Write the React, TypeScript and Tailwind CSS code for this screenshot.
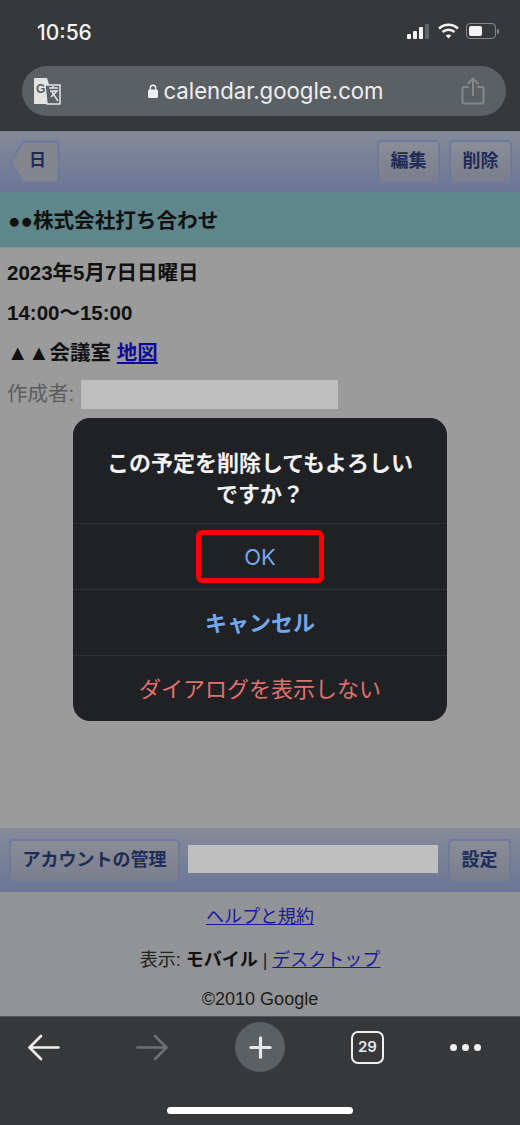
import React from 'react';
import { Plus } from 'lucide-react';

const jp = "font-['Liberation_Sans','Noto_Sans_CJK_JP',sans-serif]";

function BarButton({ label, className = '' }: { label: string; className?: string }) {
  return (
    <div
      className={`h-[44px] pb-[2px] flex items-center justify-center rounded-[5px] border-2 border-[#6d7a9e] bg-gradient-to-b from-[#8b8d97] to-[#7a7d8c] text-[18px] font-bold text-[#1f2c57] ${className}`}
    >
      {label}
    </div>
  );
}

function DialogRow({ label, className }: { label: string; className: string }) {
  return (
    <div className={`h-[66px] pt-[1px] flex items-center justify-center border-t border-[#2e3036] ${className}`}>
      {label}
    </div>
  );
}

function NavArrow({ color, flip = false }: { color: string; flip?: boolean }) {
  return (
    <svg width="32" height="27" viewBox="0 0 32 27" fill="none" stroke={color} strokeWidth="2.6" strokeLinecap="round" strokeLinejoin="round" className={flip ? 'rotate-180' : ''}>
      <path d="M30.5 13.5 H2 M13 2 L1.5 13.5 L13 25" />
    </svg>
  );
}

export default function App() {
  return (
    <div className={`relative w-[520px] h-[1125px] overflow-hidden flex flex-col bg-[#9b9b9b] ${jp}`}>
      {/* status bar + url bar */}
      <div className="h-[131px] shrink-0 bg-[#37383a] flex flex-col">
        <div className="h-[66px] flex items-start justify-between pl-[37px] pr-[21px] pt-[19px]">
          <span className="text-[21px] leading-[28px] font-['Inter',sans-serif] font-medium text-[#f4f4f4]">10:56</span>
          <div className="flex items-center gap-[7px] pt-[4px]">
            <svg width="24" height="15" viewBox="0 0 24 15">
              <rect x="0" y="10" width="4" height="5" rx="1" fill="#f4f4f4" />
              <rect x="6" y="7" width="4" height="8" rx="1" fill="#f4f4f4" />
              <rect x="12" y="3" width="4" height="12" rx="1" fill="#f4f4f4" />
              <rect x="18" y="0" width="4" height="15" rx="1" fill="#636466" />
            </svg>
            <svg width="21" height="16" viewBox="0 0 21 16" fill="none" stroke="#f4f4f4" strokeWidth="2.4">
              <path d="M1 5.5 C6.5 .5 14.5 .5 20 5.5" />
              <path d="M4.5 9 C8 6 13 6 16.5 9" />
              <path d="M10.5 15.5 L7.7 12.4 C9.3 11.2 11.7 11.2 13.3 12.4 Z" fill="#f4f4f4" stroke="none" />
            </svg>
            <div className="flex items-center gap-[1px]">
              <div className="w-[30px] h-[16px] rounded-[4px] border border-[#85878a] p-[2px]">
                <div className="w-[13px] h-full rounded-[2px] bg-[#f4f4f4]" />
              </div>
              <div className="w-[2px] h-[5px] rounded-r-sm bg-[#85878a]" />
            </div>
          </div>
        </div>
        <div className="ml-[22px] mr-[14px] h-[50px] rounded-[25px] bg-[#5b6064] flex items-center pl-[11px] pr-[21px]">
          <svg width="28" height="28" viewBox="0 0 28 28">
            <path d="M1 2 Q1 1 2 1 H14 L22 27 H2 Q1 27 1 26 Z" fill="#e4e4e4" />
            <path d="M12 8 H27 V27 H14 Z" fill="#5b6064" stroke="#e4e4e4" strokeWidth="1.5" />
            <text x="3" y="16" fontSize="12" fontWeight="700" fill="#5b6064" fontFamily="Liberation Sans">G</text>
            <path d="M16 11 H25 M20 9 V11 M17 14 H24 L18 20 M19 15 L25 24" fill="none" stroke="#e4e4e4" strokeWidth="1.5" />
          </svg>
          <div className="flex-1 flex items-center justify-center gap-[5px] pl-[10px]">
            <svg width="10" height="14" viewBox="0 0 10 14">
              <path d="M2.3 6 V4 a2.7 2.7 0 0 1 5.4 0 V6" fill="none" stroke="#efefef" strokeWidth="1.4" />
              <rect x="0" y="5.5" width="10" height="8.5" rx="1.5" fill="#efefef" />
            </svg>
            <span className="text-[22.2px] leading-[30px] font-['Inter',sans-serif] text-[#efefef]">calendar.google.com</span>
          </div>
          <svg width="24" height="28" viewBox="0 0 24 28" fill="none" stroke="#84888b" strokeWidth="2" strokeLinecap="round" strokeLinejoin="round">
            <path d="M7 10 H3 Q1.5 10 1.5 11.5 V25 Q1.5 26.5 3 26.5 H21 Q22.5 26.5 22.5 25 V11.5 Q22.5 10 21 10 H17" />
            <path d="M12 18 V2 M7 6.5 L12 1.5 L17 6.5" />
          </svg>
        </div>
      </div>

      {/* top toolbar */}
      <div className="h-[61px] shrink-0 border-t border-[#7d8290] bg-gradient-to-b from-[#858a99] to-[#6b7696] flex items-center justify-between pl-[9px] pr-[8px]">
        <div className="relative w-[51px] h-[44px]">
          <svg className="absolute inset-0" width="51" height="44" viewBox="0 0 51 44">
            <path d="M1.5 22 L14 1.5 H46 Q49.5 1.5 49.5 5 V39 Q49.5 42.5 46 42.5 H14 Z" fill="#84868f" stroke="#6d7a9e" strokeWidth="2" strokeLinejoin="round" />
          </svg>
          <span className="absolute left-[20px] top-[8px] text-[17px] leading-[26px] font-bold text-[#1f2c57]">日</span>
        </div>
        <div className="flex gap-[9px]">
          <BarButton label="編集" className="w-[63px]" />
          <BarButton label="削除" className="w-[63px]" />
        </div>
      </div>

      {/* title */}
      <div className="h-[56px] shrink-0 bg-[#5f878b] border-b border-[#7c9a9d] flex items-center pl-[8px] pt-[3px] text-[20.6px] font-bold text-[#111]">
        ●●株式会社打ち合わせ
      </div>

      {/* details */}
      <div className="flex-1 min-h-0 px-[7px] pt-[11px] text-[#111]">
        <div className="h-[40px] text-[20.5px] leading-[27px] font-bold">2023年5月7日日曜日</div>
        <div className="h-[40px] text-[20.5px] leading-[27px] font-bold">14:00〜15:00</div>
        <div className="h-[40px] text-[20.5px] leading-[27px] font-bold">
          <span className="text-[21.5px]">▲▲</span>会議室 <span className="text-[#0b0b96] underline">地図</span>
        </div>
        <div className="flex items-center h-[30px] text-[20.5px] text-[#5c5c5c]">
          <span>作成者:</span>
          <div className="ml-[7px] w-[257px] h-[29px] bg-[#bfbfbf]" />
        </div>
      </div>

      {/* account bar */}
      <div className="h-[64px] shrink-0 border-t-2 border-[#858a98] bg-gradient-to-b from-[#858a99] to-[#6b7696] flex items-center pl-[9px] pr-[8px]">
        <BarButton label="アカウントの管理" className="w-[171px]" />
        <div className="ml-[8px] mb-[4px] w-[250px] h-[28px] bg-[#bfbfbf]" />
        <BarButton label="設定" className="w-[63px] ml-[10px]" />
      </div>

      {/* footer */}
      <div className="h-[124px] shrink-0 bg-[#929397] flex flex-col items-center pt-[12px] text-[18px] text-[#222]">
        <div className="h-[42px] leading-[26px] text-[#1a1a9c] underline">ヘルプと規約</div>
        <div className="h-[41px] leading-[28px]">
          表示: <span className="font-bold text-[#111]">モバイル</span> | <span className="text-[#1a1a9c] underline">デスクトップ</span>
        </div>
        <div className="leading-[24px] text-[#1c1c1c]">©2010 Google</div>
      </div>

      {/* browser bottom bar */}
      <div className="h-[109px] shrink-0 bg-[#37383a] border-t border-[#55565a] flex flex-col">
        <div className="h-[60px] flex items-center">
          <div className="w-[88px] flex justify-center">
            <NavArrow color="#f0f0f0" />
          </div>
          <div className="w-[128px] flex justify-center">
            <NavArrow color="#6e6f71" flip />
          </div>
          <div className="ml-[19px] w-[50px] h-[50px] rounded-full bg-[#5b6064] flex items-center justify-center">
            <Plus className="w-[33px] h-[33px] text-[#e8e8e8]" strokeWidth={2.3} />
          </div>
          <div className="ml-[66px] w-[33px] h-[33px] rounded-[7px] border-[2.5px] border-[#f0f0f0] flex items-center justify-center text-[15px] font-['Inter',sans-serif] font-semibold text-[#e8e8e8]">
            29
          </div>
          <div className="ml-[66px] flex gap-[5px]">
            <div className="w-[7px] h-[7px] rounded-full bg-[#f0f0f0]" />
            <div className="w-[7px] h-[7px] rounded-full bg-[#f0f0f0]" />
            <div className="w-[7px] h-[7px] rounded-full bg-[#f0f0f0]" />
          </div>
        </div>
        <div className="flex justify-center pt-[30px]">
          <div className="w-[186px] h-[7px] rounded-full bg-white" />
        </div>
      </div>

      {/* confirm dialog */}
      <div className="absolute left-[73px] top-[418px] w-[374px] h-[303px] rounded-[17px] bg-[#202125] overflow-hidden flex flex-col">
        <div className="h-[105px] shrink-0 pt-[30px] text-center text-[22px] leading-[31px] font-bold text-[#f2f2f2]">
          <div>この予定を削除してもよろしい</div>
          <div>ですか{'\uFF1F'}</div>
        </div>
        <DialogRow label="OK" className="text-[22px] text-[#72a9ea] font-['Inter',sans-serif]" />
        <DialogRow label="キャンセル" className="text-[22px] font-bold text-[#72a9ea]" />
        <DialogRow label="ダイアログを表示しない" className="text-[22px] text-[#e0726e]" />
      </div>

      {/* red highlight round OK */}
      <div className="absolute left-[196px] top-[530px] w-[128px] h-[53px] rounded-[6px] border-[5.5px] border-[#ff0000]" />
    </div>
  );
}
